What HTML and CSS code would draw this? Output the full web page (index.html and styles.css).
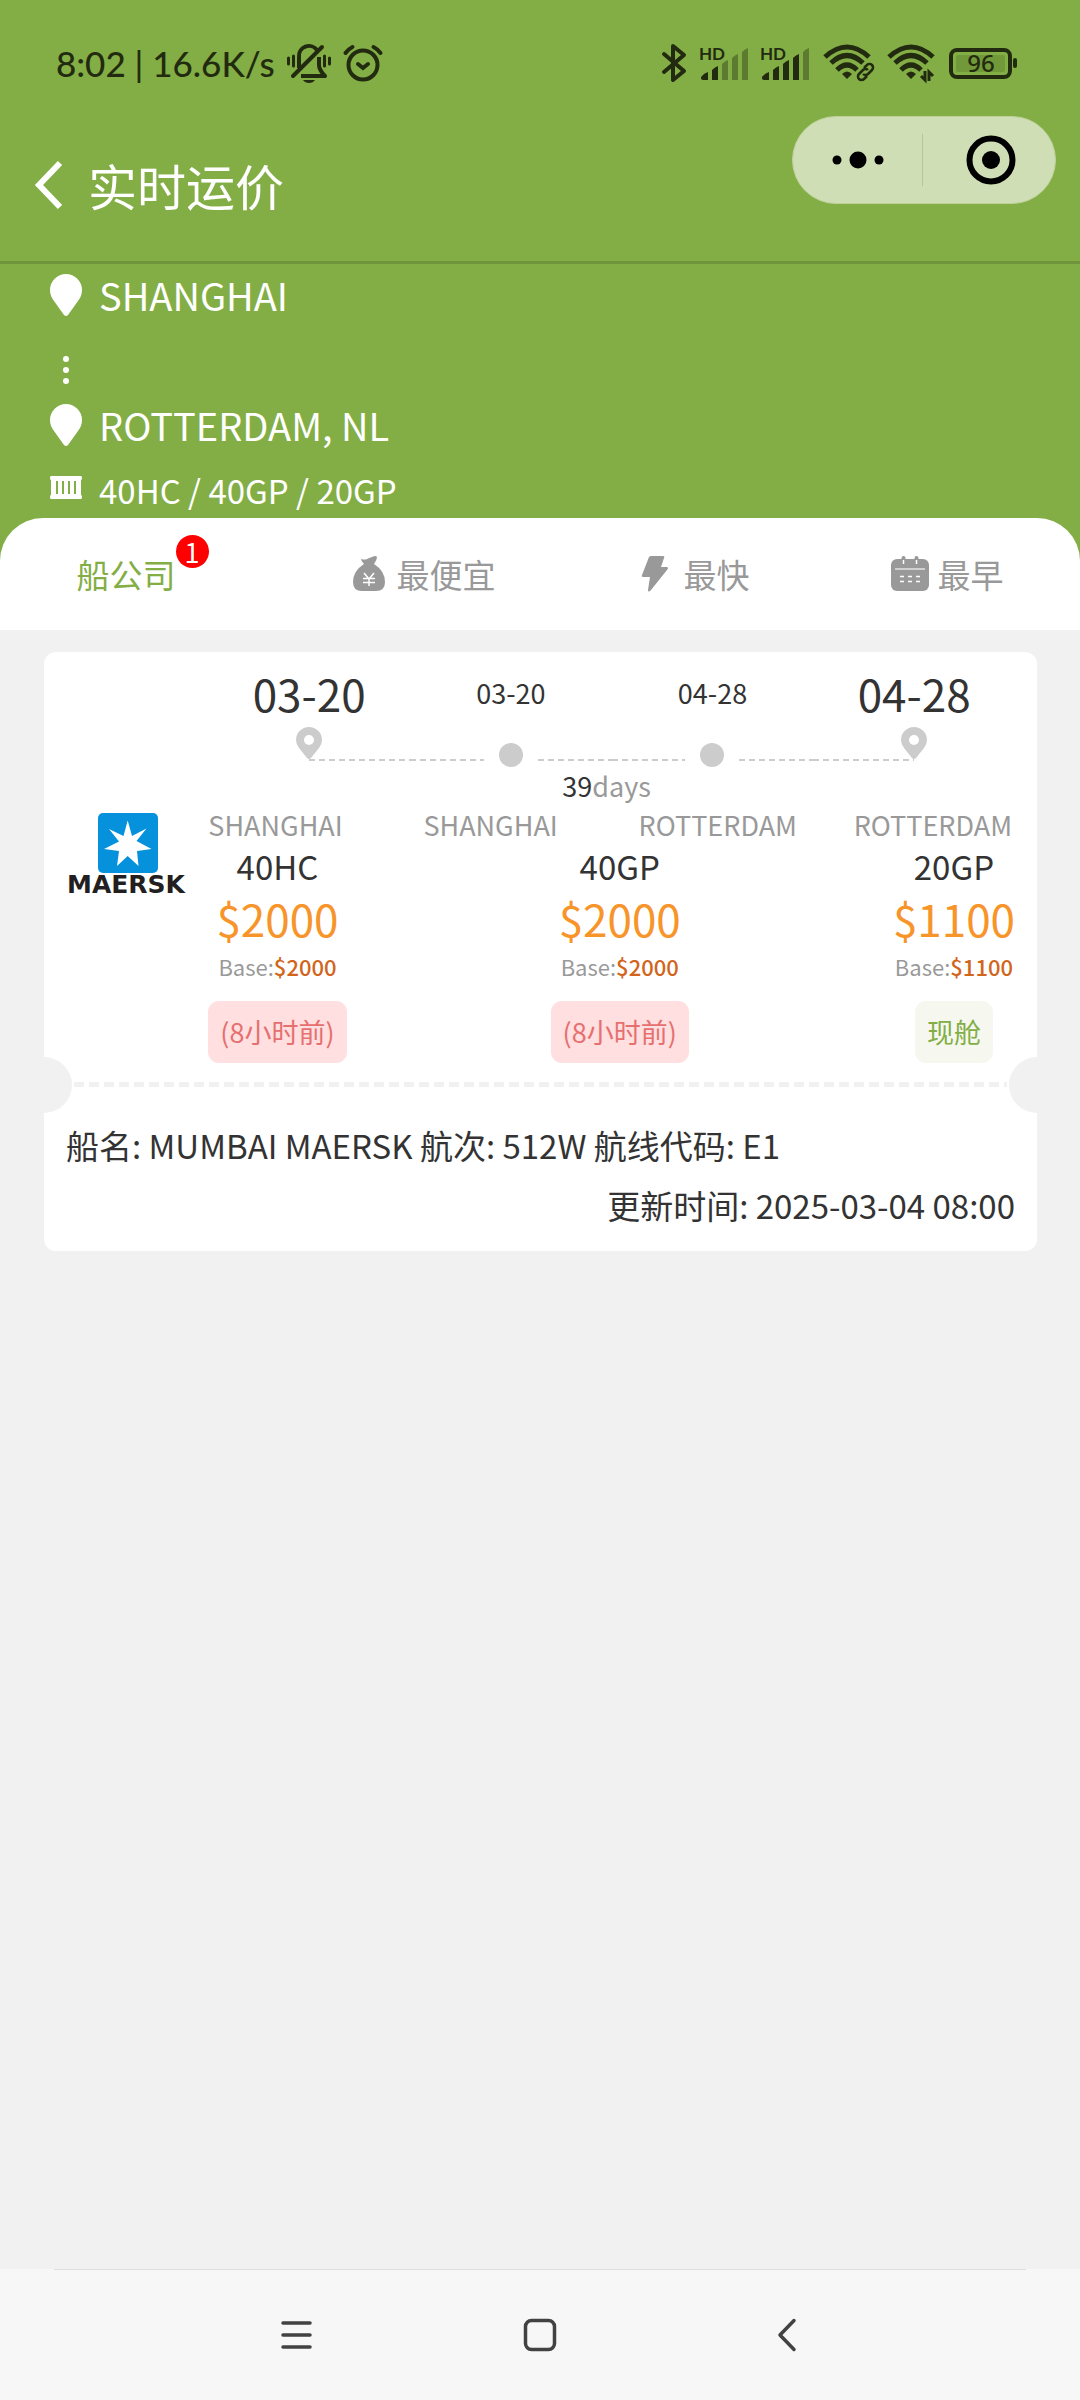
FILE: index.html
```html
<!DOCTYPE html>
<html lang="zh-CN">
<head>
  <meta charset="UTF-8" />
  <meta name="viewport" content="width=device-width, initial-scale=1.0"/>
  <title>实时运价</title>
  <link rel="stylesheet" href="styles.css">
</head>
<body>

  <header class="header">
    <div class="status-bar">
      <div class="status-left">
        <span>8:02 | 16.6K/s</span>
        <svg class="icon-bell" width="44" height="40" viewBox="0 0 44 40" fill="none" stroke="#222b0f" stroke-width="4">
          <path d="M12 25V14a10 10 0 0 1 18-7M32 14v8q0 5 6 11H14" stroke-linejoin="round"/>
          <path d="M6 33L35 4" stroke-linecap="round"/>
          <path d="M16 37h12q-2 3-6 3t-6-3z" fill="#222b0f" stroke="none"/>
          <path d="M1.500 15v6M6.500 13v10M37.500 13v10M42.500 15v6" stroke-width="3" stroke-linecap="round"/>
        </svg>
        <svg class="icon-alarm" width="40" height="38" viewBox="0 0 40 38" fill="none" stroke="#222b0f" stroke-width="4" stroke-linecap="round">
          <circle cx="20" cy="21" r="14.500"/>
          <path d="M15 20l5 4 5-4"/>
          <path d="M2.500 9q3-4 7-6M37.500 9q-3-4-7-6"/>
        </svg>
      </div>
      <div class="status-right">
        <svg class="icon-bluetooth" width="26" height="40" viewBox="0 0 26 40" fill="none" stroke="#222b0f" stroke-width="4" stroke-linecap="round" stroke-linejoin="round">
          <path d="M3 11l20 17-11 9V3l11 9L3 29"/>
        </svg>
        <svg class="icon-signal" width="49" height="36" viewBox="0 0 49 36" fill="#222b0f">
          <text class="hd" x="0" y="15">HD</text>
          <path d="M2 32q3-4 7-5v8H4q-2 0-2-2zM13 25q3-3 6-4v14h-6z"/>
          <path d="M23 19q3-3 6-4v20h-6zM33 13q3-3 6-4v26h-6zM43 7q3-3 6-4v32h-6z" fill="#5c7b30"/>
        </svg>
        <svg class="icon-signal" width="52" height="36" viewBox="0 0 52 36" fill="#222b0f">
          <text class="hd" x="0" y="15">HD</text>
          <path d="M2 32q3-4 7-5v8H4q-2 0-2-2zM13 25q3-3 6-4v14h-6zM23 19q3-3 6-4v20h-6zM33 13q3-3 6-4v26h-6z"/>
          <path d="M43 7q3-3 6-4v32h-6z" fill="#5c7b30"/>
        </svg>
        <svg class="icon-wifi" width="52" height="38" viewBox="0 0 52 38" fill="none" stroke="#222b0f" stroke-width="5">
          <path d="M1 13Q23-7 45 13M7 19Q23 4 39 19M13 26q10-10 20 0"/>
          <path d="M23 35l-5-5q5-5 10 0z" fill="#222b0f" stroke="none"/>
          <g stroke-width="2.500" stroke="#222b0f">
            <path d="M40 24l3-3a3.500 3.500 0 0 1 5 5l-4 4a3.500 3.500 0 0 1-5 0"/>
            <path d="M43 32l-3 3a3.500 3.500 0 0 1-5-5l4-4a3.500 3.500 0 0 1 5 0"/>
          </g>
        </svg>
        <svg class="icon-wifi" width="48" height="38" viewBox="0 0 48 38" fill="none" stroke="#222b0f" stroke-width="5">
          <path d="M1 13Q23-7 45 13M7 19Q23 4 39 19M13 26q10-10 20 0"/>
          <path d="M23 35l-5-5q5-5 10 0z" fill="#222b0f" stroke="none"/>
          <path d="M37 27v9l-4-4M41 37v-9l4 4" stroke-width="3"/>
        </svg>
        <svg width="70" height="32" viewBox="0 0 70 32">
          <rect x="3" y="3" width="59" height="27" rx="6" fill="none" stroke="#222b0f" stroke-width="4"/>
          <rect x="8" y="8" width="49" height="17" rx="2" fill="#729939"/>
          <rect x="65" y="11" width="4" height="10" rx="2" fill="#222b0f"/>
          <text class="battery" x="33" y="25" text-anchor="middle">96</text>
        </svg>
      </div>
    </div>

    <div class="nav-bar">
      <button class="back" aria-label="返回">
        <svg width="30" height="48" viewBox="0 0 30 48" fill="none" stroke="#fff" stroke-width="6">
          <path d="M26 2L5 24l21 22"/>
        </svg>
      </button>
      <h1>实时运价</h1>
      <div class="capsule">
        <button aria-label="更多">
          <svg width="52" height="18" viewBox="0 0 52 18">
            <circle cx="5" cy="9" r="4.500"/>
            <circle cx="26" cy="9" r="8.500"/>
            <circle cx="47" cy="9" r="4.500"/>
          </svg>
        </button>
        <button aria-label="关闭">
          <svg width="50" height="50" viewBox="0 0 50 50">
            <circle cx="25" cy="25" r="21.500" fill="none" stroke="#000" stroke-width="6"/>
            <circle cx="25" cy="25" r="9"/>
          </svg>
        </button>
      </div>
    </div>
  </header>

  <section class="route">
    <div class="route-row">
      <svg width="32" height="42" viewBox="0 0 32 42" fill="#fff"><path d="M16 0a16 16 0 0 1 16 16q0 6-4 11L18 41q-2 2-4 0L4 27q-4-5-4-11A16 16 0 0 1 16 0z"/></svg>
      <span>SHANGHAI</span>
    </div>
    <div class="route-dots">
      <svg width="32" height="30" viewBox="0 0 32 30" fill="#fff">
        <circle cx="16" cy="4" r="3"/><circle cx="16" cy="15" r="3"/><circle cx="16" cy="26" r="3"/>
      </svg>
    </div>
    <div class="route-row">
      <svg width="32" height="42" viewBox="0 0 32 42" fill="#fff"><path d="M16 0a16 16 0 0 1 16 16q0 6-4 11L18 41q-2 2-4 0L4 27q-4-5-4-11A16 16 0 0 1 16 0z"/></svg>
      <span>ROTTERDAM, NL</span>
    </div>
    <div class="route-row boxes">
      <svg width="32" height="28" viewBox="0 0 32 28">
        <path d="M1 0h30q1 0 1 2t-1 2v15q1 0 1 2t-1 2H1q-1 0-1-2t1-2V4Q0 4 0 2t1-2z" fill="#fff"/>
        <path d="M7 5v13M13 5v13M19 5v13M25 5v13" stroke="#83ae45" stroke-width="2"/>
      </svg>
      <span>40HC / 40GP / 20GP</span>
    </div>
  </section>

  <div class="tabs-wrap">
    <nav class="tabs">
      <button class="tab active">船公司<span class="count">1</span></button>
      <button class="tab">
        <svg width="38" height="36" viewBox="0 0 38 36">
          <path d="M11 3q4 1 6 0t5-2q4-2 5 0 0 3-3 7 11 7 11 18 0 9-9 9H12q-9 0-9-9Q3 15 14 8q-3-3-3-5z" fill="#999"/>
          <path d="M14 17l5 6 5-6M19 23v7M13 22.500h12M13 26.500h12" fill="none" stroke="#fff" stroke-width="1.500"/>
        </svg>
        <span>最便宜</span>
      </button>
      <button class="tab">
        <svg width="38" height="36" viewBox="0 0 38 36">
          <path d="M14 0h12q2 0 1 2l-3 9h6q2 1 0 3L14 34q-3 3-3 0l2-13H7q-3 0-2-2l7-18q1-1 2-1z" fill="#999"/>
        </svg>
        <span>最快</span>
      </button>
      <button class="tab">
        <svg width="38" height="36" viewBox="0 0 38 36">
          <rect x="0" y="3" width="38" height="32" rx="6" fill="#999"/>
          <path d="M12.500 2v6M25.500 2v6" stroke="#999" stroke-width="4" stroke-linecap="round"/>
          <path d="M12.500 4v4M25.500 4v4" stroke="#fff" stroke-width="1.500"/>
          <path d="M4 13h30" stroke="#d0d0d0" stroke-width="2"/>
          <path d="M9 20.500h4M17 20.500h4M25 20.500h4M9 25.500h4M17 25.500h4M25 25.500h4" stroke="#fff" stroke-width="1.500"/>
        </svg>
        <span>最早</span>
      </button>
    </nav>
  </div>

  <main class="list">
    <article class="card">
      <div class="card-top">
        <div class="carrier">
          <svg width="120" height="88" viewBox="0 0 120 88">
            <rect x="32" y="1" width="60" height="60" rx="5" fill="#0591db"/>
            <path d="M61.700 8.500L66 24 80.500 16.500 70.500 29 85.500 37 71 39 72.500 54 61.700 44 51 54 53 39 38 37 53 29.500 43 17 57.500 24z" fill="#fff"/>
            <text class="carrier-name" x="60" y="81" text-anchor="middle">MAERSK</text>
          </svg>
        </div>

        <div class="schedule">
          <div class="dates">
            <span class="big">03-20</span>
            <span>03-20</span>
            <span>04-28</span>
            <span class="big">04-28</span>
          </div>
          <div class="track">
            <div class="stop start">
              <svg width="26" height="32" viewBox="0 0 26 32"><path d="M13 0a13 13 0 0 1 13 13q0 4-3 8l-8 10q-2 2-4 0L3 21q-3-4-3-8A13 13 0 0 1 13 0zM13 8a5 5 0 1 0 0 10 5 5 0 0 0 0-10z" fill="#ccc" fill-rule="evenodd"/></svg>
            </div>
            <div class="stop"><i class="dot"></i></div>
            <div class="stop"><i class="dot"></i></div>
            <div class="stop end">
              <svg width="26" height="32" viewBox="0 0 26 32"><path d="M13 0a13 13 0 0 1 13 13q0 4-3 8l-8 10q-2 2-4 0L3 21q-3-4-3-8A13 13 0 0 1 13 0zM13 8a5 5 0 1 0 0 10 5 5 0 0 0 0-10z" fill="#ccc" fill-rule="evenodd"/></svg>
            </div>
          </div>
          <div class="days"><b>39</b>days</div>
          <div class="ports">
            <span>SHANGHAI</span>
            <span>SHANGHAI</span>
            <span>ROTTERDAM</span>
            <span>ROTTERDAM</span>
          </div>
          <div class="prices">
            <div class="price">
              <span class="box-type">40HC</span>
              <span class="amount">$2000</span>
              <span class="base">Base:<b>$2000</b></span>
              <span class="tag">(8小时前)</span>
            </div>
            <div class="price">
              <span class="box-type">40GP</span>
              <span class="amount">$2000</span>
              <span class="base">Base:<b>$2000</b></span>
              <span class="tag">(8小时前)</span>
            </div>
            <div class="price">
              <span class="box-type">20GP</span>
              <span class="amount">$1100</span>
              <span class="base">Base:<b>$1100</b></span>
              <span class="tag spot">现舱</span>
            </div>
          </div>
        </div>
      </div>

      <div class="divider"></div>

      <div class="card-info">
        <p>船名: MUMBAI MAERSK 航次: 512W 航线代码: E1</p>
        <p class="updated">更新时间: 2025-03-04 08:00</p>
      </div>
    </article>
  </main>

  <footer class="system-nav">
    <button aria-label="菜单">
      <svg width="34" height="34" viewBox="0 0 34 34" stroke="#424242" stroke-width="3.500" stroke-linecap="round"><path d="M4 5h27M4 17h27M4 29h27"/></svg>
    </button>
    <button aria-label="主页">
      <svg width="34" height="34" viewBox="0 0 34 34"><rect x="2.500" y="2.500" width="29" height="29" rx="6" fill="none" stroke="#424242" stroke-width="3.500"/></svg>
    </button>
    <button aria-label="返回">
      <svg width="34" height="34" viewBox="0 0 34 34" fill="none" stroke="#424242" stroke-width="3.500" stroke-linecap="round" stroke-linejoin="round"><path d="M27 2.500L13 17 27 31.500"/></svg>
    </button>
  </footer>

</body>
</html>
```
FILE: styles.css
```css
* {
  box-sizing: border-box;
}

body {
  display: flex;
  flex-direction: column;
  min-height: 100vh;
  margin: 0;
  background: #f1f1f1;
  color: #333;
  font-family: "Noto Sans CJK SC", sans-serif;
  font-size: 27px;
}

button {
  padding: 0;
  border: none;
  background: none;
  color: inherit;
  font: inherit;
  cursor: pointer;
}

svg {
  display: block;
  flex: none;
  overflow: visible;
}

/* header */
.header {
  background: #83ae45;
  border-bottom: 3px solid #6f943b;
}

.status-bar {
  display: flex;
  justify-content: space-between;
  align-items: center;
  height: 112px;
  padding: 14px 62px 0 56px;
  color: #222b0f;
  font-family: Lato, sans-serif;
  font-size: 35px;
  font-weight: 500;
}

.status-left,
.status-right {
  display: flex;
  align-items: center;
  gap: 12px;
}

.hd {
  font-size: 17px;
  font-weight: 700;
}

.battery {
  font-family: "Noto Sans", sans-serif;
  font-size: 24px;
  font-weight: 500;
  fill: #222b0f;
}

.nav-bar {
  display: flex;
  align-items: center;
  height: 149px;
  padding: 0 24px 3px 34px;
  color: #fff;
}

.nav-bar h1 {
  flex: 1;
  margin: 0 0 0 24px;
  font-size: 49px;
  font-weight: 400;
  line-height: 60px;
}

.capsule {
  display: flex;
  align-self: flex-start;
  width: 264px;
  height: 88px;
  margin-top: 4px;
  border: 1px solid #bdd19b;
  border-radius: 44px;
  background: #cfdeb5;
}

.capsule button {
  display: flex;
  flex: 1;
  align-items: center;
  justify-content: center;
}

.capsule button + button {
  padding-left: 4px;
  background: linear-gradient(#b4c798, #b4c798) left center / 1px 52px no-repeat;
}

/* route */
.route {
  padding: 2px 50px 0;
  background: #83ae45;
  color: #fff;
  font-size: 38px;
}

.route-row {
  display: flex;
  align-items: center;
  gap: 17px;
  height: 58px;
  line-height: 58px;
}

.route-dots {
  height: 72px;
  padding-top: 31px;
}

.boxes {
  height: 64px;
  padding-top: 8px;
  font-size: 33px;
}

/* tabs */
.tabs-wrap {
  background: #83ae45;
}

.tabs {
  display: flex;
  justify-content: space-around;
  height: 112px;
  padding: 0 6px;
  border-radius: 43px 43px 0 0;
  background: #fff;
  color: #999;
  font-size: 33px;
}

.tab {
  display: flex;
  align-items: center;
  gap: 9px;
}

.tab.active {
  gap: 0;
  color: #83ae45;
}

.count {
  align-self: flex-start;
  width: 33px;
  height: 33px;
  margin-top: 17px;
  border-radius: 50%;
  background: #f00;
  color: #fff;
  font-size: 27px;
  line-height: 33px;
}

/* card */
.list {
  flex: 1;
  padding: 22px 43px 22px 44px;
}

.card {
  overflow: hidden;
  padding-top: 12px;
  border-radius: 12px;
  background: #fff;
}

.card-top {
  display: flex;
  align-items: center;
  padding: 0 22px;
}

.carrier {
  width: 15%;
  padding-bottom: 16px;
}

.carrier-name {
  fill: #231f20;
  font-family: "DejaVu Sans", sans-serif;
  font-size: 25px;
  font-weight: 700;
}

.schedule {
  width: 85%;
}

.dates,
.track {
  display: grid;
  grid-template-columns: repeat(4, 1fr);
  text-align: center;
}

.dates {
  line-height: 58px;
}

.dates .big {
  font-size: 44px;
}

.stop {
  display: flex;
  align-items: flex-end;
  height: 45px;
}

.stop svg {
  margin-bottom: 8px;
}

.stop::before,
.stop::after {
  content: "";
  flex: 1;
  height: 2px;
  margin-bottom: 6px;
  background: repeating-linear-gradient(to right, #ccc 0 6px, transparent 6px 10px);
}

.stop::before {
  margin-right: 15px;
}

.stop::after {
  margin-left: 15px;
}

.start::before,
.end::after {
  flex: none;
  width: calc(50% - 13px);
  margin: 0;
  background: none;
}

.start::after {
  margin-left: -13px;
}

.end::before {
  margin-right: -13px;
}

.dot {
  width: 24px;
  height: 24px;
  border-radius: 50%;
  background: #ccc;
}

.days {
  padding-right: 10px;
  color: #999;
  line-height: 38px;
  text-align: center;
}

.days b {
  color: #333;
  font-weight: 400;
}

.ports {
  display: grid;
  grid-template-columns: repeat(4, 20%);
  justify-content: space-between;
  color: #999;
  line-height: 39px;
}

.prices {
  display: flex;
  justify-content: space-between;
}

.price {
  display: flex;
  flex-direction: column;
  align-items: center;
}

.box-type {
  font-size: 33px;
  line-height: 44px;
}

.amount {
  color: #f7942a;
  font-size: 44px;
  line-height: 60px;
}

.base {
  color: #999;
  font-size: 22px;
  line-height: 36px;
}

.base b {
  color: #d2651c;
  font-weight: 500;
}

.tag {
  height: 62px;
  margin-top: 17px;
  padding: 0 12px;
  border-radius: 11px;
  background: #ffdfe0;
  color: #e66f6f;
  line-height: 62px;
}

.tag.spot {
  background: #f6f8f0;
  color: #83ae45;
}

.divider {
  position: relative;
  height: 5px;
  margin: 19px 30px 0;
  background: repeating-linear-gradient(to right, #f1f1f1 0 10px, transparent 10px 15px);
}

/* ticket notches */
.divider::before,
.divider::after {
  content: "";
  position: absolute;
  top: -25px;
  width: 56px;
  height: 56px;
  border-radius: 50%;
  background: #f1f1f1;
}

.divider::before {
  left: -58px;
}

.divider::after {
  right: -58px;
}

.card-info {
  padding: 28px 22px 16px;
  font-size: 33px;
  line-height: 60px;
}

.card-info p {
  margin: 0;
}

.updated {
  text-align: right;
}

/* system navigation */
.system-nav {
  display: flex;
  justify-content: center;
  gap: 210px;
  height: 131px;
  background: linear-gradient(#ddd, #ddd) center top / 90% 1px no-repeat #f7f7f7;
}

.system-nav button {
  display: flex;
  align-items: center;
}
```
